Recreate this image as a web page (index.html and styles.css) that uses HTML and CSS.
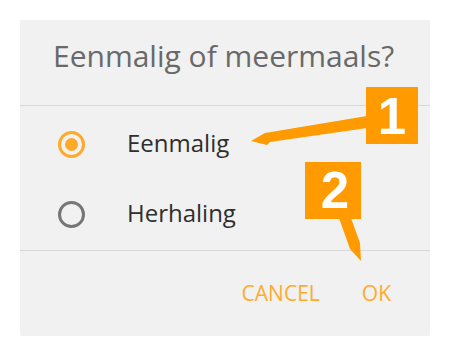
FILE: index.html
```html
<!DOCTYPE html>
<html lang="nl">
<head>
    <meta charset="UTF-8">
    <meta name="viewport" content="width=device-width, initial-scale=1.0">
    <title>Eenmalig of meermaals?</title>
    <link rel="stylesheet" href="styles.css">
</head>
<body>
    <div class="dialog">
        <h1 class="dialog-title">Eenmalig of meermaals?</h1>

        <div class="options">
            <label class="option">
                <span class="radio checked"></span>
                <span class="option-label">Eenmalig</span>
            </label>
            <label class="option">
                <span class="radio"></span>
                <span class="option-label">Herhaling</span>
            </label>
        </div>

        <div class="actions">
            <button class="action">CANCEL</button>
            <button class="action">OK</button>
        </div>
    </div>

    <!-- annotation markers drawn on top of the screenshot -->
    <svg class="annotations" width="450" height="356" viewBox="0 0 450 356">
        <polygon class="marker" points="367,116 265,133 251,141 267,145 270,142 367,128"/>
        <rect class="marker" x="366" y="87" width="52" height="57"/>
        <text class="marker-num" x="392" y="134">1</text>

        <polygon class="marker" points="339,218 351,218 360,243 361,261 350,249"/>
        <rect class="marker" x="305" y="162" width="56" height="57"/>
        <text class="marker-num" x="335" y="208">2</text>
    </svg>
</body>
</html>
```

FILE: styles.css
```css
body {
    margin: 0;
    padding: 20px;
    background-color: #fff;
    font-family: 'Open Sans', 'Noto Sans', sans-serif;
}
.dialog {
    width: 410px;
    height: 316px;
    background-color: #f1f1f1;
    border-radius: 0 0 2px 2px;
    display: flex;
    flex-direction: column;
}
.dialog-title {
    margin: 0;
    height: 86px;
    padding: 0 0 0 33px;
    box-sizing: border-box;
    font-size: 30px;
    font-weight: normal;
    line-height: 71px;
    color: #696969;
    border-bottom: 1px solid #d8d8d8;
}
.options {
    padding: 3px 0 1px;
    border-bottom: 1px solid #d8d8d8;
}
.option {
    display: flex;
    align-items: center;
    height: 70px;
    padding-left: 38px;
}
.radio {
    width: 21px;
    height: 21px;
    border: 3px solid #767676;
    border-radius: 50%;
    position: relative;
    flex-shrink: 0;
}
.radio.checked {
    border-color: #ffa928;
}
.radio.checked::after {
    content: '';
    position: absolute;
    left: 4px;
    top: 4px;
    width: 13px;
    height: 13px;
    border-radius: 50%;
    background-color: #ffa928;
}
.option-label {
    margin-left: 42px;
    padding-bottom: 3px;
    font-size: 24px;
    color: #2e2e2e;
}
.actions {
    flex: 1;
    display: flex;
    justify-content: flex-end;
    align-items: flex-start;
    padding: 28px 39px 0 0;
    gap: 42px;
}
.action {
    background: none;
    border: none;
    padding: 0;
    font-family: inherit;
    font-size: 21px;
    color: #ffab2e;
    cursor: pointer;
}
.annotations {
    position: absolute;
    left: 0;
    top: 0;
    pointer-events: none;
}
.marker {
    fill: #ff9b00;
}
.marker-num {
    fill: #fff;
    font-family: 'Liberation Sans', Arial, sans-serif;
    font-weight: bold;
    font-size: 51px;
    text-anchor: middle;
}
```
